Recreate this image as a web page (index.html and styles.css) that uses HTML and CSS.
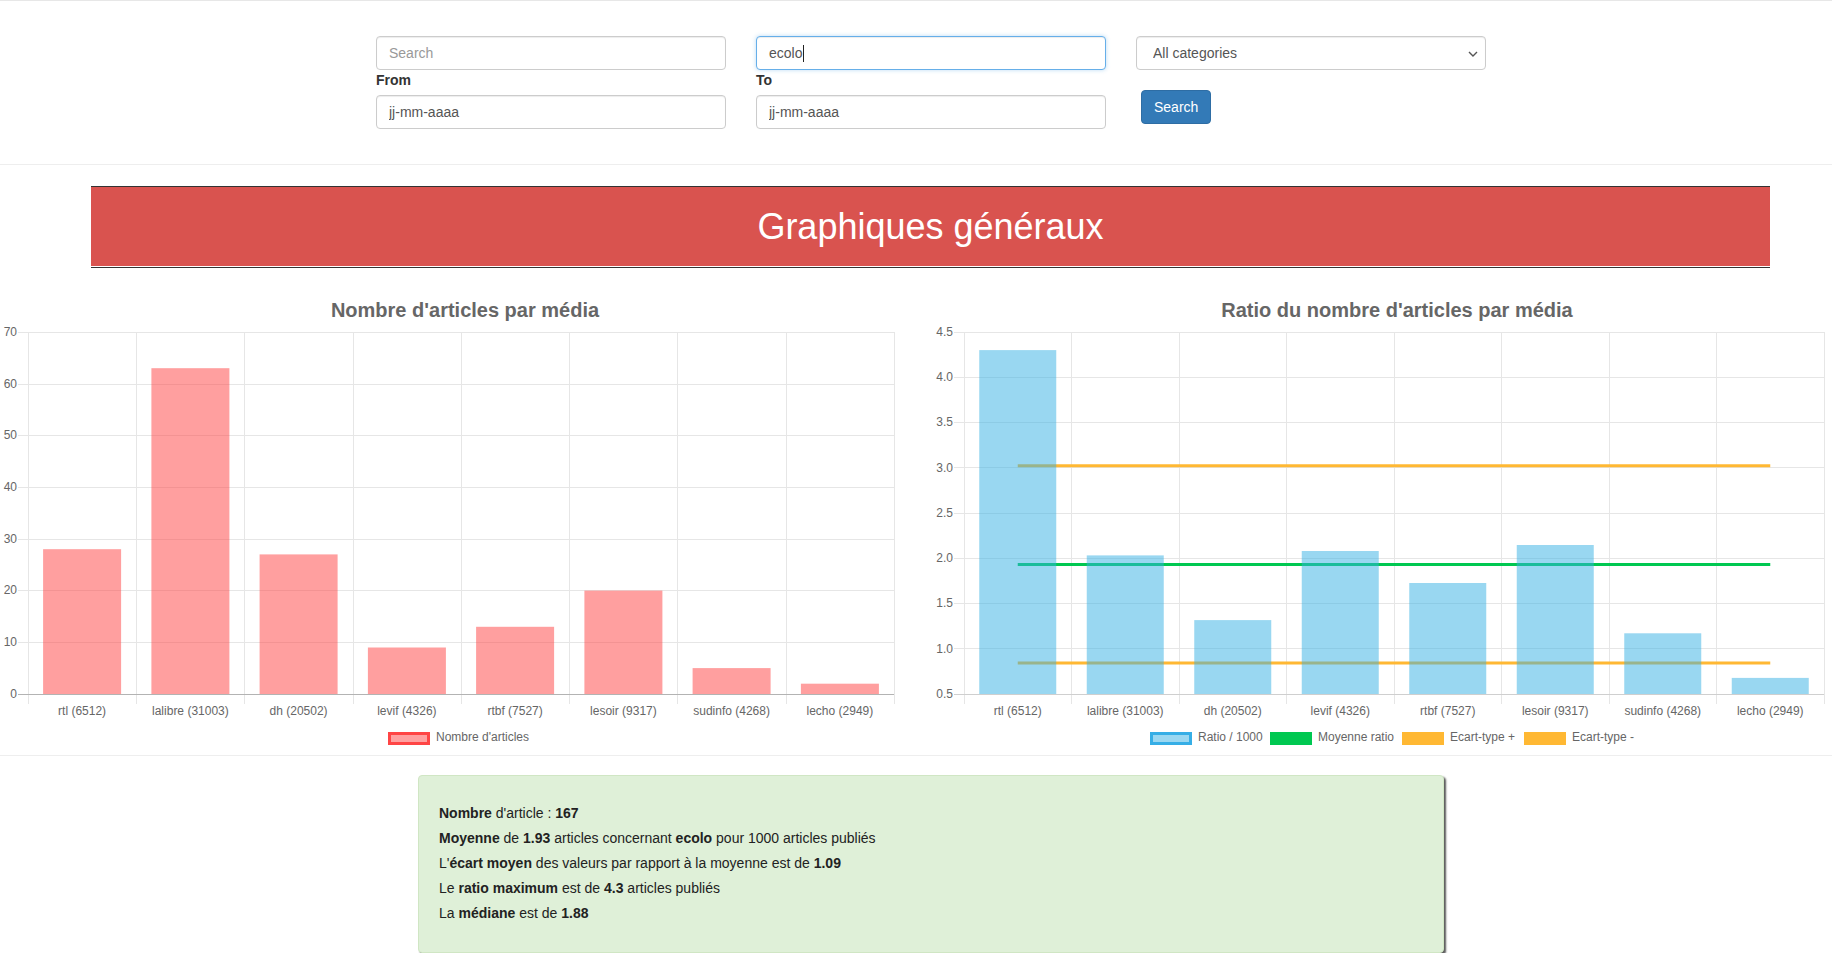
FILE: index.html
```html
<!DOCTYPE html>
<html lang="fr">
<head>
<meta charset="utf-8">
<title>Graphiques généraux</title>
<link rel="stylesheet" href="styles.css">
</head>
<body>
<header class="search-bar">
  <div class="col">
    <input class="form-control" type="text" placeholder="Search">
    <label class="lbl">From</label>
    <input class="form-control" type="text" value="jj-mm-aaaa">
  </div>
  <div class="col">
    <div class="form-control is-focus">ecolo<span class="caret"></span></div>
    <label class="lbl">To</label>
    <input class="form-control" type="text" value="jj-mm-aaaa">
  </div>
  <div class="col">
    <div class="select-wrap">
      <select class="form-control select"><option>All categories</option></select>
      <svg class="chev" width="10" height="6" viewBox="0 0 10 6"><path d="M1 1 L5 5 L9 1" fill="none" stroke="#555" stroke-width="1.4"/></svg>
    </div>
    <div><button class="btn" type="button">Search</button></div>
  </div>
</header>

<div class="banner"><h1>Graphiques généraux</h1></div>

<section class="charts">
  <svg class="chart" width="930" height="487" viewBox="0 0 930 487">
    <text class="chart-title" x="465" y="49" text-anchor="middle">Nombre d'articles par média</text>
    <g class="grid">
      <line x1="18" x2="894" y1="64.5" y2="64.5"/>
      <line x1="18" x2="894" y1="116.5" y2="116.5"/>
      <line x1="18" x2="894" y1="167.5" y2="167.5"/>
      <line x1="18" x2="894" y1="219.5" y2="219.5"/>
      <line x1="18" x2="894" y1="271.5" y2="271.5"/>
      <line x1="18" x2="894" y1="322.5" y2="322.5"/>
      <line x1="18" x2="894" y1="374.5" y2="374.5"/>
      <line x1="28.5" x2="28.5" y1="64" y2="436"/>
      <line x1="136.5" x2="136.5" y1="64" y2="436"/>
      <line x1="244.5" x2="244.5" y1="64" y2="436"/>
      <line x1="353.5" x2="353.5" y1="64" y2="436"/>
      <line x1="461.5" x2="461.5" y1="64" y2="436"/>
      <line x1="569.5" x2="569.5" y1="64" y2="436"/>
      <line x1="677.5" x2="677.5" y1="64" y2="436"/>
      <line x1="786.5" x2="786.5" y1="64" y2="436"/>
      <line x1="894.5" x2="894.5" y1="64" y2="436"/>
    </g>
    <line class="zero" x1="18" x2="894" y1="426.5" y2="426.5"/>
    <g class="ylab" text-anchor="end">
      <text x="17" y="68">70</text>
      <text x="17" y="120">60</text>
      <text x="17" y="171">50</text>
      <text x="17" y="223">40</text>
      <text x="17" y="275">30</text>
      <text x="17" y="326">20</text>
      <text x="17" y="378">10</text>
      <text x="17" y="430">0</text>
    </g>
    <g class="bars-red">
      <rect x="43.1" y="281.2" width="78" height="144.8"/>
      <rect x="151.4" y="100.2" width="78" height="325.8"/>
      <rect x="259.6" y="286.4" width="78" height="139.6"/>
      <rect x="367.9" y="379.5" width="78" height="46.5"/>
      <rect x="476.1" y="358.8" width="78" height="67.2"/>
      <rect x="584.4" y="322.6" width="78" height="103.4"/>
      <rect x="692.6" y="400.1" width="78" height="25.9"/>
      <rect x="800.9" y="415.7" width="78" height="10.3"/>
    </g>
    <g class="xlab" text-anchor="middle">
      <text x="82.1" y="447">rtl (6512)</text>
      <text x="190.4" y="447">lalibre (31003)</text>
      <text x="298.6" y="447">dh (20502)</text>
      <text x="406.9" y="447">levif (4326)</text>
      <text x="515.1" y="447">rtbf (7527)</text>
      <text x="623.4" y="447">lesoir (9317)</text>
      <text x="731.6" y="447">sudinfo (4268)</text>
      <text x="839.9" y="447">lecho (2949)</text>
    </g>
    <rect class="leg-red" x="389.5" y="465.5" width="39" height="10"/>
    <text class="leg" x="436" y="473">Nombre d'articles</text>
  </svg>

  <svg class="chart" width="902" height="487" viewBox="0 0 902 487">
    <text class="chart-title" x="467" y="49" text-anchor="middle">Ratio du nombre d'articles par média</text>
    <g class="grid">
      <line x1="24" x2="894" y1="64.5" y2="64.5"/>
      <line x1="24" x2="894" y1="109.5" y2="109.5"/>
      <line x1="24" x2="894" y1="154.5" y2="154.5"/>
      <line x1="24" x2="894" y1="199.5" y2="199.5"/>
      <line x1="24" x2="894" y1="245.5" y2="245.5"/>
      <line x1="24" x2="894" y1="290.5" y2="290.5"/>
      <line x1="24" x2="894" y1="335.5" y2="335.5"/>
      <line x1="24" x2="894" y1="380.5" y2="380.5"/>
      <line x1="34.5" x2="34.5" y1="64" y2="436"/>
      <line x1="141.5" x2="141.5" y1="64" y2="436"/>
      <line x1="249.5" x2="249.5" y1="64" y2="436"/>
      <line x1="356.5" x2="356.5" y1="64" y2="436"/>
      <line x1="464.5" x2="464.5" y1="64" y2="436"/>
      <line x1="571.5" x2="571.5" y1="64" y2="436"/>
      <line x1="679.5" x2="679.5" y1="64" y2="436"/>
      <line x1="786.5" x2="786.5" y1="64" y2="436"/>
      <line x1="894.5" x2="894.5" y1="64" y2="436"/>
    </g>
    <line class="base" x1="24" x2="894" y1="426.5" y2="426.5"/>
    <g class="ylab" text-anchor="end">
      <text x="23" y="68">4.5</text>
      <text x="23" y="113">4.0</text>
      <text x="23" y="158">3.5</text>
      <text x="23" y="204">3.0</text>
      <text x="23" y="249">2.5</text>
      <text x="23" y="294">2.0</text>
      <text x="23" y="339">1.5</text>
      <text x="23" y="385">1.0</text>
      <text x="23" y="430">0.5</text>
    </g>
    <line class="l-orange" x1="87.75" x2="840.25" y1="197.8" y2="197.8"/>
    <line class="l-green" x1="87.75" x2="840.25" y1="296.5" y2="296.5"/>
    <line class="l-orange" x1="87.75" x2="840.25" y1="395.1" y2="395.1"/>
    <g class="bars-blue">
      <rect x="49.25" y="82.1" width="77" height="343.9"/>
      <rect x="156.75" y="287.4" width="77" height="138.6"/>
      <rect x="264.25" y="352.1" width="77" height="73.9"/>
      <rect x="371.75" y="283" width="77" height="143"/>
      <rect x="479.25" y="315" width="77" height="111"/>
      <rect x="586.75" y="277" width="77" height="149"/>
      <rect x="694.25" y="365.3" width="77" height="60.7"/>
      <rect x="801.75" y="409.9" width="77" height="16.1"/>
    </g>
    <g class="xlab" text-anchor="middle">
      <text x="87.75" y="447">rtl (6512)</text>
      <text x="195.25" y="447">lalibre (31003)</text>
      <text x="302.75" y="447">dh (20502)</text>
      <text x="410.25" y="447">levif (4326)</text>
      <text x="517.75" y="447">rtbf (7527)</text>
      <text x="625.25" y="447">lesoir (9317)</text>
      <text x="732.75" y="447">sudinfo (4268)</text>
      <text x="840.25" y="447">lecho (2949)</text>
    </g>
    <rect class="leg-blue" x="221.5" y="465.5" width="39" height="10"/>
    <text class="leg" x="268" y="473">Ratio / 1000</text>
    <rect class="leg-green" x="341.5" y="465.5" width="39" height="10"/>
    <text class="leg" x="388" y="473">Moyenne ratio</text>
    <rect class="leg-orange" x="473.5" y="465.5" width="39" height="10"/>
    <text class="leg" x="520" y="473">Ecart-type +</text>
    <rect class="leg-orange" x="595.5" y="465.5" width="39" height="10"/>
    <text class="leg" x="642" y="473">Ecart-type -</text>
  </svg>
</section>

<section class="stats">
  <div class="well">
    <p><b>Nombre</b> d'article : <b>167</b></p>
    <p><b>Moyenne</b> de <b>1.93</b> articles concernant <b>ecolo</b> pour 1000 articles publiés</p>
    <p>L'<b>écart moyen</b> des valeurs par rapport à la moyenne est de <b>1.09</b></p>
    <p>Le <b>ratio maximum</b> est de <b>4.3</b> articles publiés</p>
    <p>La <b>médiane</b> est de <b>1.88</b></p>
  </div>
</section>
</body>
</html>
```

FILE: styles.css
```css
html, body {
  margin: 0;
  background: #fff;
}
body {
  font-family: "Liberation Sans", Arial, Helvetica, sans-serif;
  font-size: 14px;
  line-height: 20px;
  color: #333;
}

/* ---- search bar ---- */
.search-bar {
  border-top: 1px solid #e7e7e7;
  border-bottom: 1px solid #eee;
  padding: 35px 0 35px 376px;
  display: grid;
  grid-template-columns: repeat(3, 350px);
  column-gap: 30px;
}
.col {
  display: flex;
  flex-direction: column;
}
.form-control {
  display: block;
  width: 100%;
  height: 34px;
  box-sizing: border-box;
  padding: 6px 12px;
  font-family: inherit;
  font-size: 14px;
  line-height: 20px;
  color: #555;
  background: #fff;
  border: 1px solid #ccc;
  border-radius: 4px;
  box-shadow: inset 0 1px 1px rgba(0, 0, 0, .075);
  margin: 0;
  outline: none;
}
.form-control::placeholder {
  color: #999;
  opacity: 1;
}
.is-focus {
  border-color: #66afe9;
  box-shadow: inset 0 1px 1px rgba(0, 0, 0, .075), 0 0 4px rgba(102, 175, 233, .45);
  display: flex;
  align-items: center;
}
.caret {
  display: inline-block;
  width: 1px;
  height: 17px;
  background: #222;
  margin-left: 1px;
}
.lbl {
  display: block;
  font-weight: bold;
  line-height: 20px;
  margin-bottom: 5px;
  color: #333;
}
.select-wrap {
  position: relative;
}
.select {
  appearance: none;
  -webkit-appearance: none;
  padding-left: 16px;
}
.chev {
  position: absolute;
  right: 8px;
  top: 15px;
}
.btn {
  margin: 20px 0 0 5px;
  height: 34px;
  padding: 6px 12px;
  font-family: inherit;
  font-size: 14px;
  line-height: 20px;
  color: #fff;
  background: #337ab7;
  border: 1px solid #2e6da4;
  border-radius: 4px;
}

/* ---- banner ---- */
.banner {
  margin: 21px 0 0 91px;
  width: 1679px;
  border-top: 1px solid #333;
  border-bottom: 1px solid #333;
  padding-bottom: 1px;
  background: #d9534f;
  background-clip: content-box;
}
.banner h1 {
  margin: 0;
  padding: 20px 0;
  font-size: 36px;
  line-height: 39px;
  font-weight: normal;
  color: #fff;
  text-align: center;
}

/* ---- charts ---- */
.charts {
  display: flex;
  height: 487px;
  border-bottom: 1px solid #eee;
}
.chart {
  display: block;
  flex: none;
}
.chart text {
  font-family: "Liberation Sans", Arial, Helvetica, sans-serif;
  font-size: 12px;
  fill: #666;
}
.chart .chart-title {
  font-size: 20px;
  font-weight: bold;
  fill: #666;
}
.grid line {
  stroke: #e6e6e6;
  stroke-width: 1;
}
.zero {
  stroke: #b3b3b3;
  stroke-width: 1;
}
.base {
  stroke: #cfcfcf;
  stroke-width: 1;
}
.bars-red rect {
  fill: rgb(255, 64, 64);
  fill-opacity: .5;
}
.bars-blue rect {
  fill: rgb(51, 175, 227);
  fill-opacity: .5;
}
.l-orange {
  stroke: #ffb833;
  stroke-width: 3;
}
.l-green {
  stroke: #00c851;
  stroke-width: 3;
}
.leg-red {
  fill: #ffa0a0;
  stroke: #ff4545;
  stroke-width: 3;
}
.leg-blue {
  fill: #9ad7f1;
  stroke: #36aee6;
  stroke-width: 3;
}
.leg-green {
  fill: #00c851;
  stroke: #00c851;
  stroke-width: 3;
}
.leg-orange {
  fill: #ffb833;
  stroke: #ffb833;
  stroke-width: 3;
}

/* ---- stats ---- */
.stats {
  padding-top: 19px;
}
.well {
  margin-left: 418px;
  width: 1026px;
  box-sizing: border-box;
  background: #dff0d8;
  border: 1px solid #d0e6c4;
  border-radius: 4px;
  padding: 27px 20px 24px;
  box-shadow: 2px 2px 2px rgba(0, 0, 0, .65);
  color: #222;
}
.well p {
  margin: 0 0 5px;
}
```
